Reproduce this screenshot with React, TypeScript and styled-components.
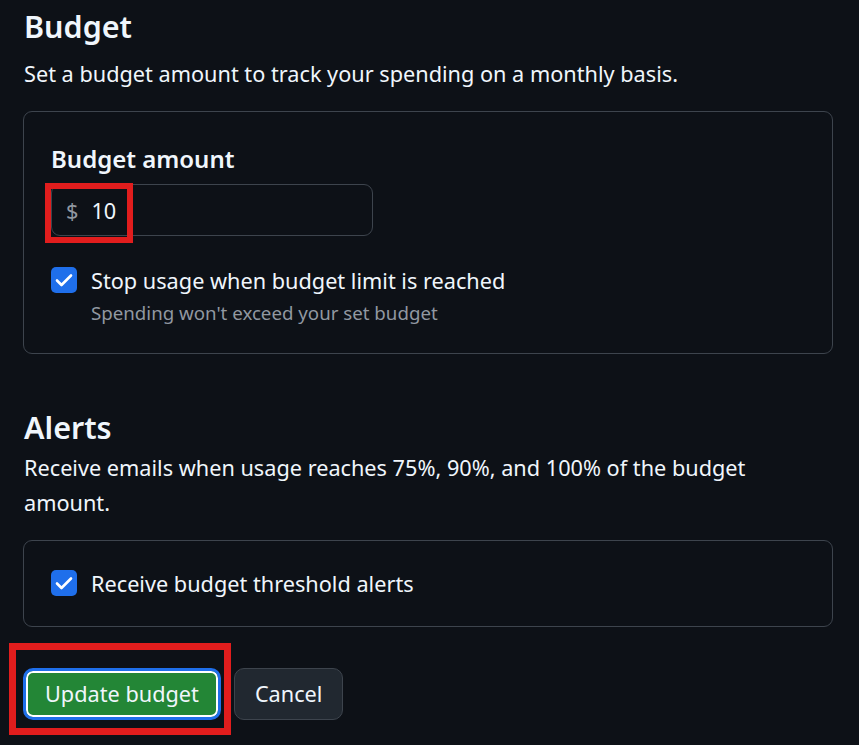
import React from "react";
import styled, { createGlobalStyle } from "styled-components";

const GlobalStyle = createGlobalStyle`
  html, body {
    margin: 0;
    padding: 0;
    background: #0d1117;
  }
  body {
    font-family: "Noto Sans", "Open Sans", sans-serif;
    color: #f0f6fc;
  }
`;

const Page = styled.div`
  width: 810px;
  padding: 4px 0 30px 23px;
  display: flex;
  flex-direction: column;
`;

const Title = styled.h2<{ $top?: number }>`
  margin: ${(p) => p.$top ?? 0}px 0 0 1px;
  font-size: 30.5px;
  font-weight: 600;
  line-height: 44px;
`;

const Lead = styled.p<{ $top: number; $lh: number }>`
  margin: ${(p) => p.$top}px 0 0 1px;
  font-size: 21.7px;
  line-height: ${(p) => p.$lh}px;
`;

const Card = styled.div<{ $top: number; $pad: string }>`
  margin-top: ${(p) => p.$top}px;
  border: 1px solid #3d444d;
  border-radius: 9px;
  padding: ${(p) => p.$pad};
  display: flex;
  flex-direction: column;
`;

const Label = styled.div`
  font-size: 24px;
  font-weight: 600;
  line-height: 32px;
`;

const InputBox = styled.div`
  position: relative;
  margin-top: 9px;
  width: 322px;
  height: 52px;
  box-sizing: border-box;
  border: 1px solid #3d444d;
  border-radius: 9px;
  display: flex;
  align-items: center;
  padding-left: 14px;
  font-size: 21.7px;
`;

const Prefix = styled.span`
  color: #9198a1;
  margin-right: 13px;
`;

const Value = styled.span`
  color: #f0f6fc;
`;

const Highlight = styled.div<{ $w: number }>`
  position: absolute;
  border: ${(p) => p.$w}px solid #e11d1d;
  box-sizing: border-box;
  pointer-events: none;
`;

const CheckRow = styled.div<{ $top?: number }>`
  margin-top: ${(p) => p.$top ?? 0}px;
  display: flex;
  align-items: flex-start;
  gap: 14px;
`;

const Box = styled.span`
  width: 26px;
  height: 26px;
  margin-top: 1px;
  flex: none;
  border-radius: 5px;
  background: #1f6feb;
  display: flex;
  align-items: center;
  justify-content: center;
`;

const CheckText = styled.div`
  display: flex;
  flex-direction: column;
`;

const CheckLabel = styled.span`
  font-size: 21.7px;
  line-height: 30px;
`;

const Hint = styled.span`
  margin-top: 3px;
  font-size: 18.7px;
  line-height: 28px;
  color: #9198a1;
`;

const Actions = styled.div`
  margin-top: 41px;
  display: flex;
  align-items: center;
  gap: 13px;
`;

const PrimaryWrap = styled.div`
  position: relative;
`;

const Button = styled.button<{ $primary?: boolean }>`
  height: 52px;
  box-sizing: border-box;
  font-family: inherit;
  font-size: 21.7px;
  line-height: 1;
  border-radius: 10px;
  cursor: pointer;
  color: #f0f6fc;
  padding: 0 ${(p) => (p.$primary ? 19 : 20)}px;
  background: ${(p) => (p.$primary ? "#238636" : "#212830")};
  border: ${(p) => (p.$primary ? "3px solid #1f6feb" : "1px solid #3d444d")};
  box-shadow: ${(p) => (p.$primary ? "inset 0 0 0 2px #ffffff" : "none")};
`;

const Check = () => (
  <Box>
    <svg width="18" height="14" viewBox="0 0 18 14" fill="none">
      <path d="M2 7.5 L6.5 12 L16 2.5" stroke="#fff" strokeWidth="2.6" strokeLinecap="round" strokeLinejoin="round" />
    </svg>
  </Box>
);

export default function App() {
  return (
    <>
      <GlobalStyle />
      <Page>
        <Title>Budget</Title>
        <Lead $top={11} $lh={30}>
          Set a budget amount to track your spending on a monthly basis.
        </Lead>
        <Card $top={22} $pad="31px 27px 26px">
          <Label>Budget amount</Label>
          <InputBox>
            <Prefix>$</Prefix>
            <Value>10</Value>
            <Highlight $w={6} style={{ left: -7, top: -2, width: 88, height: 60 }} />
          </InputBox>
          <CheckRow $top={30}>
            <Check />
            <CheckText>
              <CheckLabel>Stop usage when budget limit is reached</CheckLabel>
              <Hint>Spending won't exceed your set budget</Hint>
            </CheckText>
          </CheckRow>
        </Card>

        <Title $top={51}>Alerts</Title>
        <Lead $top={1} $lh={35}>
          Receive emails when usage reaches 75%, 90%, and 100% of the budget amount.
        </Lead>
        <Card $top={20} $pad="28px 27px 27px">
          <CheckRow>
            <Check />
            <CheckLabel>Receive budget threshold alerts</CheckLabel>
          </CheckRow>
        </Card>

        <Actions>
          <PrimaryWrap>
            <Button $primary>Update budget</Button>
            <Highlight $w={7} style={{ left: -14, top: -25, width: 222, height: 92 }} />
          </PrimaryWrap>
          <Button>Cancel</Button>
        </Actions>
      </Page>
    </>
  );
}
